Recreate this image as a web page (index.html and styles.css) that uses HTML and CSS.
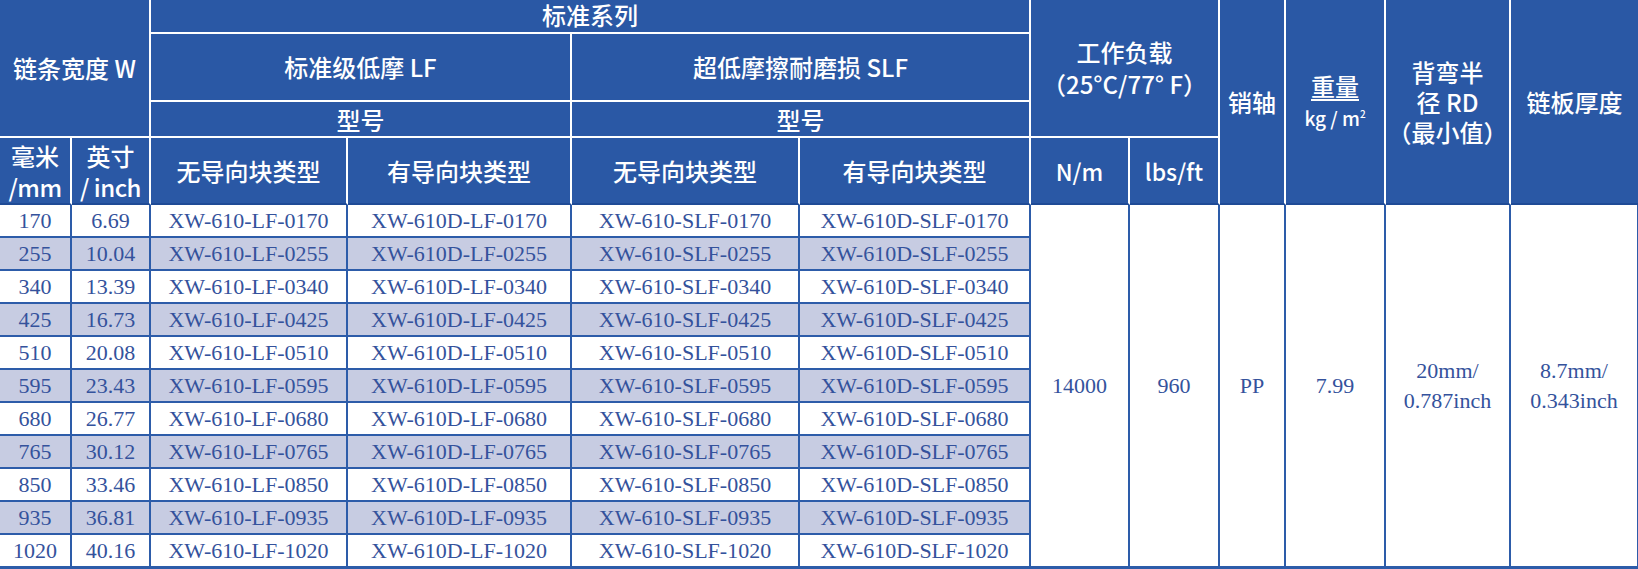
FILE: index.html
```html
<!DOCTYPE html>
<html lang="zh-CN">
<head>
<meta charset="utf-8">
<title>XW-610 链条规格表</title>
<link rel="stylesheet" href="styles.css">
</head>
<body>
<table class="spec">
  <colgroup>
    <col class="c-mm"><col class="c-in"><col class="c-lf1"><col class="c-lf2"><col class="c-slf1"><col class="c-slf2">
    <col class="c-nm"><col class="c-lbs"><col class="c-pin"><col class="c-wt"><col class="c-rd"><col class="c-th">
  </colgroup>
  <thead>
    <tr class="h1">
      <th colspan="2" rowspan="3">链条宽度 W</th>
      <th colspan="4" class="top">标准系列</th>
      <th colspan="2" rowspan="3" class="load">工作负载<br>（25°C/77° F）</th>
      <th rowspan="4" class="hb">销轴</th>
      <th rowspan="4" class="hb"><span class="ul">重量</span><br><span class="unit">kg / m<sup>2</sup></span></th>
      <th rowspan="4" class="hb rd">背弯半<br>径 RD<br>（最小值）</th>
      <th rowspan="4" class="hb last">链板厚度</th>
    </tr>
    <tr class="h2">
      <th colspan="2">标准级低摩 LF</th>
      <th colspan="2">超低摩擦耐磨损 SLF</th>
    </tr>
    <tr class="h3">
      <th colspan="2" class="model">型号</th>
      <th colspan="2" class="model">型号</th>
    </tr>
    <tr class="h4">
      <th class="hb two">毫米<br><span class="sub">/mm</span></th>
      <th class="hb two">英寸<br><span class="sub">/ inch</span></th>
      <th class="hb">无导向块类型</th>
      <th class="hb">有导向块类型</th>
      <th class="hb">无导向块类型</th>
      <th class="hb">有导向块类型</th>
      <th class="hb lat">N/m</th>
      <th class="hb lat">lbs/ft</th>
    </tr>
  </thead>
  <tbody>
    <tr>
      <td>170</td><td>6.69</td><td>XW-610-LF-0170</td><td>XW-610D-LF-0170</td><td>XW-610-SLF-0170</td><td>XW-610D-SLF-0170</td>
      <td rowspan="11" class="merged">14000</td>
      <td rowspan="11" class="merged">960</td>
      <td rowspan="11" class="merged">PP</td>
      <td rowspan="11" class="merged">7.99</td>
      <td rowspan="11" class="merged two-line">20mm/<br>0.787inch</td>
      <td rowspan="11" class="merged two-line last">8.7mm/<br>0.343inch</td>
    </tr>
    <tr class="alt"><td>255</td><td>10.04</td><td>XW-610-LF-0255</td><td>XW-610D-LF-0255</td><td>XW-610-SLF-0255</td><td>XW-610D-SLF-0255</td></tr>
    <tr><td>340</td><td>13.39</td><td>XW-610-LF-0340</td><td>XW-610D-LF-0340</td><td>XW-610-SLF-0340</td><td>XW-610D-SLF-0340</td></tr>
    <tr class="alt"><td>425</td><td>16.73</td><td>XW-610-LF-0425</td><td>XW-610D-LF-0425</td><td>XW-610-SLF-0425</td><td>XW-610D-SLF-0425</td></tr>
    <tr><td>510</td><td>20.08</td><td>XW-610-LF-0510</td><td>XW-610D-LF-0510</td><td>XW-610-SLF-0510</td><td>XW-610D-SLF-0510</td></tr>
    <tr class="alt"><td>595</td><td>23.43</td><td>XW-610-LF-0595</td><td>XW-610D-LF-0595</td><td>XW-610-SLF-0595</td><td>XW-610D-SLF-0595</td></tr>
    <tr><td>680</td><td>26.77</td><td>XW-610-LF-0680</td><td>XW-610D-LF-0680</td><td>XW-610-SLF-0680</td><td>XW-610D-SLF-0680</td></tr>
    <tr class="alt"><td>765</td><td>30.12</td><td>XW-610-LF-0765</td><td>XW-610D-LF-0765</td><td>XW-610-SLF-0765</td><td>XW-610D-SLF-0765</td></tr>
    <tr><td>850</td><td>33.46</td><td>XW-610-LF-0850</td><td>XW-610D-LF-0850</td><td>XW-610-SLF-0850</td><td>XW-610D-SLF-0850</td></tr>
    <tr class="alt"><td>935</td><td>36.81</td><td>XW-610-LF-0935</td><td>XW-610D-LF-0935</td><td>XW-610-SLF-0935</td><td>XW-610D-SLF-0935</td></tr>
    <tr class="end"><td>1020</td><td>40.16</td><td>XW-610-LF-1020</td><td>XW-610D-LF-1020</td><td>XW-610-SLF-1020</td><td>XW-610D-SLF-1020</td></tr>
  </tbody>
</table>
</body>
</html>
```
FILE: styles.css
```css
html, body {
  margin: 0;
  padding: 0;
  background: #ffffff;
}

.spec {
  width: 1638px;
  table-layout: fixed;
  border-collapse: separate;
  border-spacing: 0;
}

.c-mm { width: 72px; }
.c-in { width: 79px; }
.c-lf1 { width: 197px; }
.c-lf2 { width: 224px; }
.c-slf1 { width: 228px; }
.c-slf2 { width: 231px; }
.c-nm { width: 99px; }
.c-lbs { width: 90px; }
.c-pin { width: 66px; }
.c-wt { width: 100px; }
.c-rd { width: 125px; }
.c-th { width: 127px; }

.spec th {
  background: #2a58a5;
  color: #ffffff;
  font-family: "Noto Sans CJK SC", "Noto Sans", sans-serif;
  font-size: 24px;
  font-weight: 500;
  line-height: 30px;
  padding: 0;
  text-align: center;
  vertical-align: middle;
  border-right: 2px solid #ffffff;
  border-bottom: 2px solid #ffffff;
  white-space: nowrap;
}

.spec th.hb { border-bottom: 2px solid #1f4b96; }
.spec th.last { border-right: none; }

.spec th.top { line-height: 30px; padding-bottom: 2px; }
.spec th.model { vertical-align: bottom; line-height: 32px; }
.spec th.lat { font-size: 23px; }
.spec th.two { line-height: 31px; }
.spec th.rd { line-height: 30px; }
.spec th.load { line-height: 32px; }

.sub {
  letter-spacing: -0.5px;
}

.ul {
  border-bottom: 2px solid #ffffff;
  line-height: 26px;
  display: inline-block;
}

.unit {
  font-size: 19px;
  line-height: 30px;
}

.unit sup {
  font-size: 10px;
  vertical-align: 8px;
  line-height: 0;
}

.h1 { height: 34px; }
.h2 { height: 68px; }
.h3 { height: 36px; }
.h4 { height: 67px; }

.spec tbody tr { height: 33px; }
.spec tbody tr.end { height: 34px; }

.spec td {
  font-family: "Liberation Serif", "DejaVu Serif", serif;
  font-size: 22px;
  line-height: 24px;
  color: #34529c;
  background: #ffffff;
  text-align: center;
  vertical-align: middle;
  padding: 0;
  border-right: 2px solid #2d5ca9;
  border-bottom: 2px solid #2d5ca9;
  white-space: nowrap;
  overflow: hidden;
}

.spec tr.alt td { background: #c7cce2; }
.spec tr.alt td.merged,
.spec td.merged { background: #ffffff; border-bottom: 3px solid #2d5ca9; }
.spec tr.end td { border-bottom: 3px solid #2d5ca9; }
.spec td.two-line { line-height: 30px; }
.spec td.last { border-right: 1px solid #2d5ca9; }
```
